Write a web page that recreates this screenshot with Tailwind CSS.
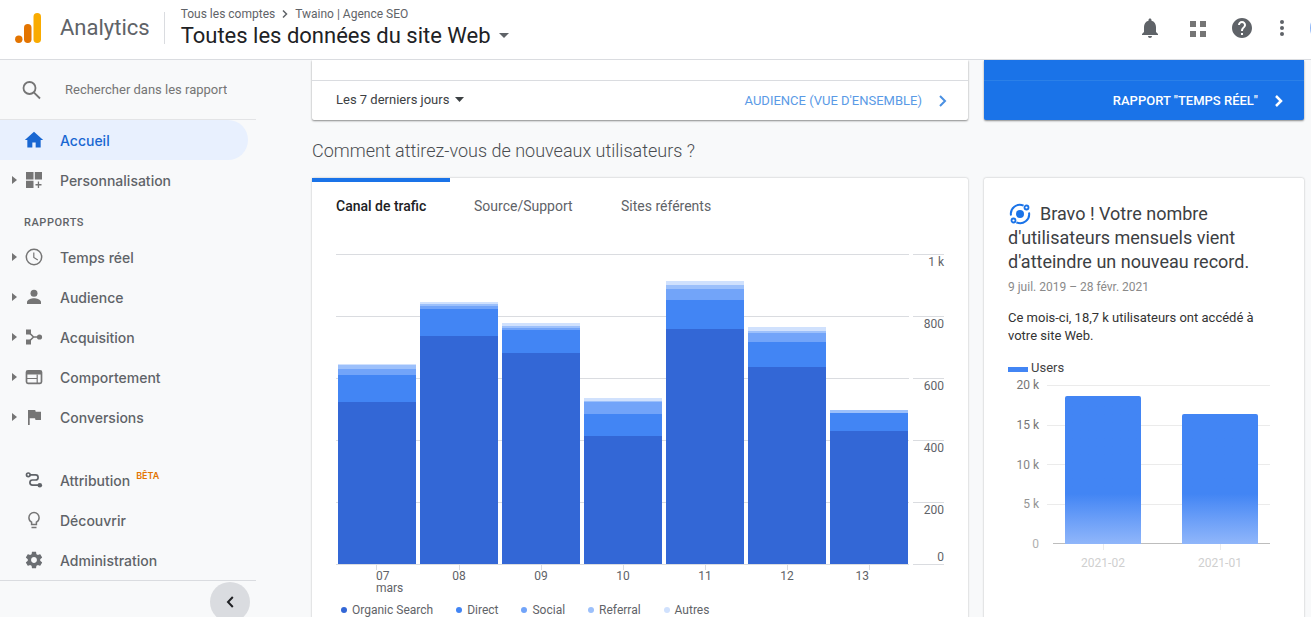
<!DOCTYPE html>
<html lang="fr">
<head>
<meta charset="utf-8">
<meta name="viewport" content="width=device-width, initial-scale=1">
<title>Analytics</title>
<script src="https://cdn.jsdelivr.net/npm/@tailwindcss/browser@4"></script>
</head>
<body class="flex h-screen flex-col overflow-hidden bg-[#f8f9fa] font-[Roboto,sans-serif] text-[#3c4043]">

<header class="flex h-15 shrink-0 items-center overflow-hidden border-b border-[#dadce0] bg-white pb-1 pl-3">
  <a href="#" class="flex items-center">
    <svg class="size-8" viewBox="0 0 32 32" aria-hidden="true">
      <rect x="21.500" y="1" width="7.500" height="30" rx="3.750" fill="#f9ab00"/>
      <rect x="12" y="12" width="7.500" height="19" rx="3.750" fill="#e37400"/>
      <circle cx="6.800" cy="27.300" r="3.700" fill="#e37400"/>
    </svg>
    <span class="ml-4 text-[22px] leading-8 text-[#5f6368]">Analytics</span>
  </a>
  <div class="ml-3.5 h-8 w-px bg-[#dadce0]"></div>
  <div class="ml-4 flex flex-col">
    <nav class="flex items-center gap-1.5 text-xs leading-4 text-[#5f6368]">
      <a href="#">Tous les comptes</a>
      <svg class="h-2 w-2" viewBox="0 0 8 8" fill="none" stroke="#5f6368" stroke-width="1.500"><path d="M2 .5 5.500 4 2 7.500"/></svg>
      <a href="#">Twaino | Agence SEO</a>
    </nav>
    <button class="flex items-center gap-2 text-[22px] leading-7 text-[#202124]">Toutes les données du site Web
      <svg class="h-[5px] w-[10px]" viewBox="0 0 10 5" fill="#5f6368"><path d="M0 0h10L5 5z"/></svg>
    </button>
  </div>
  <div class="ml-auto flex items-center text-[#5f6368]">
    <button aria-label="Notifications"><svg class="size-6" viewBox="0 0 24 24" fill="currentColor"><path d="M12 22c1.100 0 2-.9 2-2h-4c0 1.100.9 2 2 2zm6-6v-5c0-3.070-1.630-5.640-4.500-6.320V4c0-.83-.67-1.500-1.500-1.500s-1.500.67-1.500 1.500v.68C7.640 5.360 6 7.920 6 11v5l-2 2v1h16v-1l-2-2z"/></svg></button>
    <button aria-label="Applications" class="ml-6"><svg class="size-6" viewBox="0 0 24 24" fill="#757575"><path d="M4 5h6v6H4zM14 5h6v6h-6zM4 15h6v6H4zM14 15h6v6h-6z"/></svg></button>
    <button aria-label="Aide" class="ml-5"><svg class="size-6" viewBox="0 0 24 24" fill="currentColor"><path d="M12 2C6.480 2 2 6.480 2 12s4.480 10 10 10 10-4.480 10-10S17.520 2 12 2zm1 17h-2v-2h2v2zm2.070-7.750l-.9.920C13.450 12.900 13 13.500 13 15h-2v-.5c0-1.100.45-2.100 1.170-2.830l1.240-1.260c.37-.36.590-.86.590-1.410 0-1.100-.9-2-2-2s-2 .9-2 2H8c0-2.210 1.790-4 4-4s4 1.790 4 4c0 .88-.36 1.680-.93 2.250z"/></svg></button>
    <button aria-label="Plus" class="ml-4"><svg class="size-6" viewBox="0 0 24 24" fill="currentColor"><circle cx="12" cy="6" r="2"/><circle cx="12" cy="12" r="2"/><circle cx="12" cy="18" r="2"/></svg></button>
    <button aria-label="Compte" class="-mr-[31px] ml-4 size-8 rounded-full bg-[#8ab4f8]"></button>
  </div>
</header>

<div class="flex min-h-0 flex-1">
  <aside class="flex w-64 shrink-0 flex-col text-[14px] font-medium text-[#5f6368]">
    <label class="flex h-15 shrink-0 items-center border-b border-[#e3e4e6] pl-5">
      <svg class="size-6" viewBox="0 0 24 24" fill="none" stroke="#757575" stroke-width="1.800" aria-label="Rechercher"><circle cx="9.500" cy="10" r="6"/><path d="m13.800 14.300 6.200 6.200"/></svg>
      <input type="text" placeholder="Rechercher dans les rapports" class="ml-[21px] w-[162px] text-[13px] font-normal outline-none placeholder:text-[#757575]">
    </label>
    <nav class="flex flex-col font-[Inter,sans-serif]">
      <a href="#" class="mr-2 flex h-10 items-center rounded-r-full bg-[#e8f0fe] text-[#1967d2]">
        <svg class="ml-6 size-5" viewBox="0 0 24 24" fill="currentColor"><path d="M10 21v-6h4v6h6v-9h3L12 2 1 12h3v9z"/></svg>
        <span class="ml-4">Accueil</span></a>
      <a href="#" class="flex h-10 items-center">
        <svg class="ml-3 h-2 w-[5px]" viewBox="0 0 5 8" fill="#757575"><path d="M0 0v8l5-4z"/></svg>
        <svg class="ml-[7px] size-5" viewBox="0 0 20 20" fill="#757575"><path d="M2 2h7.500v7.500H2zM10.800 2h7.200v7.500h-7.200zM2 10.800h7.500V18H2zM13.800 11.500h1.300v2.600H17.500v1.300h-2.400V18h-1.300v-2.600h-2.300v-1.300h2.300z"/></svg>
        <span class="ml-4">Personnalisation</span></a>
      <h2 class="mt-[13px] pl-6 font-[Roboto,sans-serif] text-[11px] leading-5 tracking-wider">RAPPORTS</h2>
      <a href="#" class="mt-1 flex h-10 items-center">
        <svg class="ml-3 h-2 w-[5px]" viewBox="0 0 5 8" fill="#757575"><path d="M0 0v8l5-4z"/></svg>
        <svg class="ml-[7px] size-5" viewBox="0 0 20 20" fill="none" stroke="#757575" stroke-width="1.500"><circle cx="10" cy="10" r="7.700"/><path d="M9.800 5.500v5l4 2.400" stroke-width="1.200"/></svg>
        <span class="ml-4">Temps réel</span></a>
      <a href="#" class="flex h-10 items-center">
        <svg class="ml-3 h-2 w-[5px]" viewBox="0 0 5 8" fill="#757575"><path d="M0 0v8l5-4z"/></svg>
        <svg class="ml-[7px] size-5" viewBox="0 0 20 20" fill="#757575"><circle cx="10" cy="6.300" r="3.500"/><path d="M3 17v-2c0-2.500 4.500-3.800 7-3.800s7 1.300 7 3.800v2z"/></svg>
        <span class="ml-4">Audience</span></a>
      <a href="#" class="flex h-10 items-center">
        <svg class="ml-3 h-2 w-[5px]" viewBox="0 0 5 8" fill="#757575"><path d="M0 0v8l5-4z"/></svg>
        <svg class="ml-[7px] size-5" viewBox="0 0 20 20" fill="#757575"><path d="M2 2.500h5v5H2zM2 12.500h5v5H2z"/><circle cx="15.500" cy="10" r="2.600"/><path d="m4.500 5 5 5-5 5M9.500 10h6" fill="none" stroke="#757575" stroke-width="1.600"/></svg>
        <span class="ml-4">Acquisition</span></a>
      <a href="#" class="flex h-10 items-center">
        <svg class="ml-3 h-2 w-[5px]" viewBox="0 0 5 8" fill="#757575"><path d="M0 0v8l5-4z"/></svg>
        <svg class="ml-[7px] size-5" viewBox="0 0 20 20" fill="none" stroke="#757575"><rect x="2.500" y="3.800" width="15" height="12.500" rx="1.500" stroke-width="1.700"/><path d="M2 5.700h16" stroke-width="3.600"/><path d="M2.500 11.500H13M13.200 7.500v9" stroke-width="1.200"/></svg>
        <span class="ml-4">Comportement</span></a>
      <a href="#" class="flex h-10 items-center">
        <svg class="ml-3 h-2 w-[5px]" viewBox="0 0 5 8" fill="#757575"><path d="M0 0v8l5-4z"/></svg>
        <svg class="ml-[7px] size-5" viewBox="0 0 20 20" fill="#757575"><path d="M4 3h7.200l.5 1.700H17V13h-5.500l-.5-1.700H5.700V18H4z"/></svg>
        <span class="ml-4">Conversions</span></a>
      <a href="#" class="mt-[23px] flex h-10 items-center">
        <svg class="ml-6 size-5" viewBox="0 0 20 20" fill="none" stroke="#5f6368" stroke-width="1.700"><circle cx="4.300" cy="4.800" r="1.800"/><path d="M6 4.800h5.500a2.600 2.600 0 0 1 0 5.200H8.500a2.600 2.600 0 0 0 0 5.200H14"/><circle cx="15.800" cy="15.200" r="2.300" fill="#5f6368" stroke="none"/></svg>
        <span class="ml-4">Attribution</span><sup class="ml-1.5 text-[9px] font-semibold text-[#e37400]">BÊTA</sup></a>
      <a href="#" class="flex h-10 items-center">
        <svg class="ml-6 size-5" viewBox="0 0 20 20" fill="none" stroke="#757575" stroke-width="1.500"><path d="M7.600 14.500v-2.300C5.800 11.200 4.900 9.600 4.900 7.700a5.100 5.100 0 0 1 10.200 0c0 1.900-.9 3.500-2.700 4.500v2.300zM7.500 17.600h5"/></svg>
        <span class="ml-4">Découvrir</span></a>
      <a href="#" class="flex h-10 items-center">
        <svg class="ml-6 size-5" viewBox="0 0 24 24" fill="#6b6e72"><path d="M19.430 12.980c.04-.32.070-.64.070-.98s-.03-.66-.07-.98l2.110-1.650c.19-.15.240-.42.120-.64l-2-3.460c-.12-.22-.39-.3-.61-.22l-2.490 1c-.52-.4-1.080-.73-1.690-.98l-.38-2.650C14.460 2.180 14.250 2 14 2h-4c-.25 0-.46.180-.49.420l-.38 2.650c-.61.250-1.170.590-1.690.98l-2.490-1c-.23-.09-.49 0-.61.220l-2 3.460c-.13.220-.07.490.12.640l2.110 1.650c-.04.320-.07.650-.07.980s.03.660.07.980l-2.110 1.650c-.19.150-.24.420-.12.640l2 3.460c.12.220.39.300.61.220l2.490-1c.52.400 1.080.730 1.690.980l.38 2.650c.03.240.24.420.49.420h4c.25 0 .46-.18.490-.42l.38-2.650c.61-.25 1.170-.59 1.690-.98l2.490 1c.23.090.49 0 .61-.22l2-3.460c.12-.22.070-.49-.12-.64l-2.110-1.650zM12 15.500c-1.930 0-3.500-1.570-3.500-3.500s1.570-3.500 3.500-3.500 3.500 1.570 3.500 3.500-1.570 3.500-3.500 3.500z"/></svg>
        <span class="ml-4">Administration</span></a>
    </nav>
    <div class="flex justify-end border-t border-[#dadce0] pt-px pr-1.5">
      <button aria-label="Réduire le menu" class="flex size-10 shrink-0 items-center justify-center rounded-full bg-[#dadce0]">
        <svg class="h-3 w-2" viewBox="0 0 8 12" fill="none" stroke="#202124" stroke-width="2"><path d="M6.800 1 2 6l4.800 5"/></svg>
      </button>
    </div>
  </aside>

  <main class="min-w-0 flex-1 overflow-hidden pr-[7px] pl-14">
    <div class="grid grid-cols-[minmax(0,1fr)_320px] gap-x-4">
      <section class="rounded-b-xs bg-white pt-5 shadow-[0_1px_2px_rgba(0,0,0,0.45)]">
        <div class="flex h-10 items-center justify-between border-t border-[#dadce0] pr-5 pl-6">
          <button class="flex items-center gap-1.5 pb-0.5 text-[13px]">Les 7 derniers jours
            <svg class="h-[5px] w-[9px]" viewBox="0 0 9 5" fill="#3c4043"><path d="M0 0h9L4.500 5z"/></svg></button>
          <a href="#" class="flex items-center gap-4 text-[13px] text-[#5a9ae6]">AUDIENCE (VUE D'ENSEMBLE)
            <svg class="h-3 w-[10px]" viewBox="0 0 10 12" fill="none" stroke="#4a90e2" stroke-width="2"><path d="m2 1 5 5-5 5"/></svg></a>
        </div>
      </section>
      <section class="rounded-b-xs bg-[#1a73e8] pt-5 shadow-[0_1px_2px_rgba(0,0,0,0.45)]">
        <div class="flex h-10 items-center justify-end border-t border-[#2b80e8] pr-5">
          <a href="#" class="flex items-center gap-4 text-[13px] font-medium text-white">RAPPORT "TEMPS RÉEL"
            <svg class="h-3 w-[10px]" viewBox="0 0 10 12" fill="none" stroke="#fff" stroke-width="2.500"><path d="m2 1 5 5-5 5"/></svg></a>
        </div>
      </section>
    </div>

    <h1 class="mt-[17px] text-[18px] leading-7 font-light text-[#4a4d51]">Comment attirez-vous de nouveaux utilisateurs ?</h1>

    <div class="mt-[13px] grid grid-cols-[minmax(0,1fr)_320px] gap-x-4">
      <section class="h-[480px] rounded-xs bg-white px-6 shadow-[0_0_2px_rgba(0,0,0,0.3)]">
        <div class="-ml-6 flex text-[14px] text-[#5f6368]" role="tablist">
          <button role="tab" aria-selected="true" class="h-13 w-[138px] border-t-4 border-[#1a73e8] pl-6 text-left font-medium text-[#202124]">Canal de trafic</button>
          <button role="tab" class="h-13 w-[147px] border-t-4 border-transparent pl-6 text-left">Source/Support</button>
          <button role="tab" class="h-13 border-t-4 border-transparent pl-6 text-left">Sites référents</button>
        </div>

        <div class="relative mt-6 text-xs leading-[14px] text-[#5f6368]">
          <div id="grid" class="flex flex-col"></div>
          <div id="bars" class="absolute inset-y-0 right-9 left-0.5 flex items-end gap-1"></div>
        </div>
        <div id="days" class="mr-9 ml-0.5 flex h-[30px] gap-1 text-xs leading-3 text-[#5f6368]"></div>

        <ul id="legend" class="mt-2 flex gap-[23px] pl-[5px] text-xs leading-4 text-[#5f6368]"></ul>
      </section>

      <section class="rounded-xs bg-white px-6 pt-6 shadow-[0_0_2px_rgba(0,0,0,0.3)]">
        <h2 class="text-[18px] leading-6 text-[#3c4043]">
          <svg class="mr-2 inline size-6 align-[-6px]" viewBox="0 0 24 24" fill="none" stroke="#1a73e8" stroke-width="2"><circle cx="12" cy="12" r="4" fill="#1a73e8" stroke="none"/><path d="M3 13.500A9 9 0 0 1 15.600 3.700M21 10.500A9 9 0 0 1 8.400 20.300"/><circle cx="18.500" cy="5.500" r="2" stroke-width="1.800"/><circle cx="5.500" cy="18.500" r="2" stroke-width="1.800"/></svg>Bravo ! Votre nombre d'utilisateurs mensuels vient d'atteindre un nouveau record.</h2>
        <p class="mt-[3px] text-xs leading-5 text-[#8a8a8a]">9 juil. 2019 – 28 févr. 2021</p>
        <p class="mt-3 text-[13px] leading-[18px] text-[#333333]">Ce mois-ci, 18,7 k utilisateurs ont accédé à votre site Web.</p>
        <div class="mt-[15px] flex items-center gap-[3px] text-[13px] leading-4 text-[#424242]"><span class="mt-0.5 h-[5px] w-5 bg-[#4285f4]"></span>Users</div>
        <div class="mt-[9px] mr-2.5 flex gap-2 text-xs leading-4">
          <div class="-mt-2 flex h-[175px] w-[31px] flex-col justify-between text-right whitespace-nowrap text-[#757575]">
            <span>20 k</span><span>15 k</span><span class="text-[#858585]">10 k</span><span class="text-[#949494]">5 k</span><span class="text-[#b0b0b0]">0</span>
          </div>
          <div class="flex-1">
            <div class="relative flex h-[159px] flex-col justify-between">
              <div class="h-px bg-[#ebebeb]"></div><div class="h-px bg-[#ebebeb]"></div><div class="h-px bg-[#ebebeb]"></div><div class="h-px bg-[#ebebeb]"></div><div class="ml-1.5 h-px bg-[#bdbdbd]"></div>
              <div class="absolute inset-y-0 right-3 left-[18px] flex items-end justify-between">
                <div class="h-[148px] w-[76px] rounded-t-xs bg-linear-to-t from-[#90b6fa] to-[#4285f4] to-[50px]"></div>
                <div class="h-[130px] w-[76px] rounded-t-xs bg-linear-to-t from-[#90b6fa] to-[#4285f4] to-[50px]"></div>
              </div>
            </div>
            <div class="mr-3 ml-[18px] flex justify-between text-center text-[#cfcfcf]">
              <div class="flex w-[76px] flex-col items-center gap-[5px]"><span class="h-1.5 w-px bg-[#ebebeb]"></span>2021-02</div>
              <div class="flex w-[76px] flex-col items-center gap-[5px]"><span class="h-1.5 w-px bg-[#ebebeb]"></span>2021-01</div>
            </div>
          </div>
        </div>
      </section>
    </div>
  </main>
</div>

<script>
  const series = [
    ['Organic Search', 'bg-[#3367d6]'],
    ['Direct', 'bg-[#4285f4]'],
    ['Social', 'bg-[#72a4f9]'],
    ['Referral', 'bg-[#9cc0fb]'],
    ['Autres', 'bg-[#d0e1fd]'],
  ];
  const days = [
    ['07', [162, 27, 6, 4, 1]],
    ['08', [228, 27, 3, 2, 2]],
    ['09', [211, 23, 2, 2, 3]],
    ['10', [128, 22, 12, 1, 3]],
    ['11', [235, 29, 11, 4, 4]],
    ['12', [197, 25, 9, 2, 4]],
    ['13', [133, 18, 0, 3, 0]],
  ];
  const last = days.length - 1;

  document.getElementById('grid').innerHTML = ['1 k', '800', '600', '400', '200'].map((t, i) =>
    `<div class="flex h-[62px] gap-1"><div class="flex-1 border-t border-[#dadce0]"></div>
     <div class="flex w-[31px] flex-col justify-between border-t border-[#dadce0] text-right"><span>${t}</span>${i === 4 ? '<span>0</span>' : ''}</div></div>`
  ).join('') + '<div class="-mb-px flex h-px gap-1"><div class="flex-1 bg-[#dadce0]"></div><div class="w-[31px] bg-[#dadce0]"></div></div>';

  document.getElementById('bars').innerHTML = days.map(([, v]) =>
    `<div class="flex flex-1 flex-col-reverse">${v.map((h, i) => `<div class="${series[i][1]}" style="height:${h}px"></div>`).join('')}</div>`
  ).join('');

  document.getElementById('days').innerHTML = days.map(([d], i) => {
    if (i === 0) return `<div class="flex flex-1 flex-col"><span class="ml-[38px] h-1.5 w-px bg-[#dadce0]"></span><span class="ml-[38px]">${d}<br>mars</span></div>`;
    if (i === last) return `<div class="flex flex-1 flex-col items-center"><span class="h-1.5 w-px bg-[#dadce0]"></span><span class="w-1/2 self-start text-right">${d}</span></div>`;
    return `<div class="flex flex-1 flex-col items-center"><span class="h-1.5 w-px bg-[#dadce0]"></span><span>${d}</span></div>`;
  }).join('');

  document.getElementById('legend').innerHTML = series.map(([n, c]) =>
    `<li class="flex items-center gap-[5px]"><span class="size-1.5 rounded-full ${c}"></span>${n}</li>`).join('');
</script>
</body>
</html>
